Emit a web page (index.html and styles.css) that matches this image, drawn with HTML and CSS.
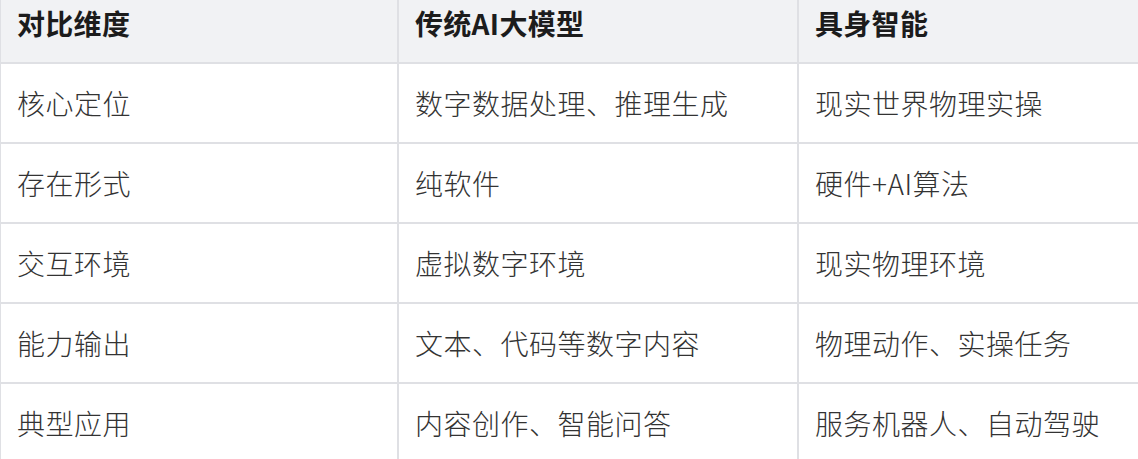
FILE: index.html
```html
<!DOCTYPE html>
<html lang="zh-CN">
<head>
<meta charset="utf-8">
<title>对比</title>
<link rel="stylesheet" href="styles.css">
</head>
<body>
<table class="cmp">
  <colgroup>
    <col class="c1">
    <col class="c2">
    <col class="c3">
  </colgroup>
  <thead>
    <tr>
      <th>对比维度</th>
      <th>传统AI大模型</th>
      <th>具身智能</th>
    </tr>
  </thead>
  <tbody>
    <tr><td>核心定位</td><td>数字数据处理、推理生成</td><td>现实世界物理实操</td></tr>
    <tr><td>存在形式</td><td>纯软件</td><td>硬件+AI算法</td></tr>
    <tr><td>交互环境</td><td>虚拟数字环境</td><td>现实物理环境</td></tr>
    <tr><td>能力输出</td><td>文本、代码等数字内容</td><td>物理动作、实操任务</td></tr>
    <tr><td>典型应用</td><td>内容创作、智能问答</td><td>服务机器人、自动驾驶</td></tr>
  </tbody>
</table>
</body>
</html>
```

FILE: styles.css
```css
html, body {
  margin: 0;
  padding: 0;
  overflow: hidden;
  background: #ffffff;
}

.cmp {
  border-collapse: separate;
  border-spacing: 0;
  table-layout: fixed;
  width: 1160px;
  font-family: "Noto Sans CJK SC", "Noto Sans", sans-serif;
  font-size: 28px;
  letter-spacing: 0.5px;
  color: #333333;
}

.c1 { width: 399px; }
.c2 { width: 400px; }
.c3 { width: 361px; }

.cmp th,
.cmp td {
  box-sizing: border-box;
  text-align: left;
  vertical-align: middle;
  padding: 0 16px;
  border-right: 2px solid #dfe0e4;
  border-bottom: 2px solid #dfe0e4;
  line-height: 1.3;
  white-space: nowrap;
}

.cmp th:first-child,
.cmp td:first-child {
  border-left: 1px solid #dfe0e4;
}

.cmp th {
  background: #f1f2f4;
  color: #1c1c1c;
  font-weight: 700;
  letter-spacing: 0.3px;
  height: 64px;
  padding-bottom: 15px;
}

.cmp td {
  height: 80px;
  font-weight: 300;
}
```
